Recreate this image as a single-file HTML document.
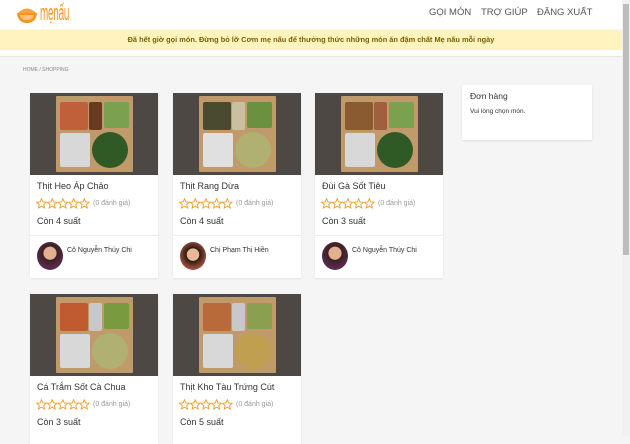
<!DOCTYPE html>
<html><head><meta charset="utf-8"><style>
*{box-sizing:border-box;margin:0;padding:0}
body{width:630px;height:436px;overflow:hidden;background:#f5f5f5;font-family:"Liberation Sans",sans-serif;position:relative}
.hdr{position:absolute;left:0;top:0;width:622px;height:29px;background:#fff}
.nav{position:absolute;top:7px;font-size:9.5px;color:#555;white-space:nowrap}
.ban{position:absolute;left:0;top:30px;width:622px;height:20px;background:#fff3bf;color:#7a6200;font-size:7.4px;font-weight:bold;text-align:center;line-height:20px}
.white{position:absolute;left:0;top:50px;width:622px;height:7px;background:#fff;border-bottom:1px solid #e8e8e8}
.bc{position:absolute;left:23px;top:67px;font-size:5px;color:#888}
.card{position:absolute;width:128px;background:#fff;box-shadow:0 1px 2px rgba(0,0,0,.08)}
.img{height:82px;background:#4d4843;position:relative;overflow:hidden}
.box{position:absolute;left:26px;top:3px;width:77px;height:76px;background:#c09a6a;border-radius:1px}
.c1,.c2,.c3,.c4,.c5{position:absolute;border-radius:2px}
.t{font-size:9px;color:#333;margin:6px 0 0 7px}
.st{margin:6px 0 0 6px;font-size:7px;color:#999;display:flex;align-items:center;height:12px}
.st svg{margin-right:3px}
.q{font-size:9px;color:#333;margin:7px 0 0 7px;height:12px}
.cook{border-top:1px solid #eee;margin-top:7px;height:45px;position:relative}
.av{position:absolute;left:7px;top:6px;width:26px;height:28px;border-radius:50%;background:radial-gradient(circle at 50% 40%,#e0b090 30%,#3a2020 32%,#5a2a50 70%)}
.cn{position:absolute;left:37px;top:11px;font-size:7px;color:#333}
.side{position:absolute;left:462px;top:85px;width:130px;height:55px;background:#fff;box-shadow:0 1px 2px rgba(0,0,0,.1)}
.sb{position:absolute;left:622px;top:0;width:8px;height:436px;background:#f1f1f1}
.th{position:absolute;left:623px;top:4px;width:6px;height:251px;background:#bcbcbc}
</style></head><body>
<svg width="0" height="0" style="position:absolute"><defs><symbol id="s" viewBox="0 0 12 12"><path d="M6 .8 7.5 4.3 11.3 4.6 8.4 7.1 9.3 10.9 6 8.9 2.7 10.9 3.6 7.1.7 4.6 4.5 4.3Z" fill="none" stroke="#f39c2e" stroke-width="1"/></symbol></defs></svg>
<div class="hdr">
<svg style="position:absolute;left:16px;top:4px" width="22" height="20" viewBox="0 0 22 20"><path d="M2 9 Q11 0 20 9 Z" fill="#f7a440"/><path d="M1 9 H21 Q20 19 11 19 Q2 19 1 9Z" fill="#f7941d"/><path d="M4 11 H18 Q17 16 11 16 Q5 16 4 11Z" fill="#fbc27a"/></svg>
<div style="position:absolute;left:40px;top:0px;font-family:'Liberation Sans',sans-serif;font-size:22px;color:#f7941d;transform:scale(.45,1);transform-origin:left top;letter-spacing:-.5px">mẹnấu</div>
<div class="nav" style="left:429px">GỌI MÓN</div>
<div class="nav" style="left:481px">TRỢ GIÚP</div>
<div class="nav" style="left:537px">ĐĂNG XUẤT</div>
</div>
<div class="ban">Đã hết giờ gọi món. Đừng bỏ lỡ Cơm mẹ nấu để thưởng thức những món ăn đậm chất Mẹ nấu mỗi ngày</div>
<div class="white"></div>
<div class="bc">HOME / SHOPPING</div>

<div class="card" style="left:30px;top:93px;height:185px"><div class="img"><div class="box"><div class="c1" style="left:4px;top:6px;width:28px;height:28px;background:#c0603a"></div><div class="c2" style="left:33px;top:6px;width:13px;height:28px;background:#6a3a20"></div><div class="c3" style="left:48px;top:6px;width:25px;height:26px;background:#7aa050"></div><div class="c4" style="left:4px;top:37px;width:30px;height:34px;background:#d8d8d8"></div><div class="c5" style="left:36px;top:36px;width:36px;height:36px;border-radius:50%;background:#2f5a25"></div></div></div>
<div class="t">Thịt Heo Áp Chảo</div><div class="st"><svg width="54" height="11"><use href="#s" x="0" width="11" height="11"/><use href="#s" x="10.7" width="11" height="11"/><use href="#s" x="21.4" width="11" height="11"/><use href="#s" x="32.1" width="11" height="11"/><use href="#s" x="42.8" width="11" height="11"/></svg>(0 đánh giá)</div><div class="q">Còn 4 suất</div>
<div class="cook"><div class="av"></div><div class="cn">Cô Nguyễn Thúy Chi</div></div></div>

<div class="card" style="left:173px;top:93px;height:185px"><div class="img"><div class="box"><div class="c1" style="left:4px;top:6px;width:28px;height:28px;background:#4a4a30"></div><div class="c2" style="left:33px;top:6px;width:13px;height:28px;background:#c8c0a0"></div><div class="c3" style="left:48px;top:6px;width:25px;height:26px;background:#6a9040"></div><div class="c4" style="left:4px;top:37px;width:30px;height:34px;background:#e0e0e0"></div><div class="c5" style="left:36px;top:36px;width:36px;height:36px;border-radius:50%;background:#b0b070"></div></div></div>
<div class="t">Thịt Rang Dừa</div><div class="st"><svg width="54" height="11"><use href="#s" x="0" width="11" height="11"/><use href="#s" x="10.7" width="11" height="11"/><use href="#s" x="21.4" width="11" height="11"/><use href="#s" x="32.1" width="11" height="11"/><use href="#s" x="42.8" width="11" height="11"/></svg>(0 đánh giá)</div><div class="q">Còn 4 suất</div>
<div class="cook"><div class="av" style="background:radial-gradient(circle at 50% 45%,#e8b898 30%,#2a1a10 32%,#a05040 70%)"></div><div class="cn">Chị Phạm Thị Hiền</div></div></div>

<div class="card" style="left:315px;top:93px;height:185px"><div class="img"><div class="box"><div class="c1" style="left:4px;top:6px;width:28px;height:28px;background:#8a5a30"></div><div class="c2" style="left:33px;top:6px;width:13px;height:28px;background:#a06040"></div><div class="c3" style="left:48px;top:6px;width:25px;height:26px;background:#7aa050"></div><div class="c4" style="left:4px;top:37px;width:30px;height:34px;background:#d8d8d8"></div><div class="c5" style="left:36px;top:36px;width:36px;height:36px;border-radius:50%;background:#2f5a25"></div></div></div>
<div class="t">Đùi Gà Sốt Tiêu</div><div class="st"><svg width="54" height="11"><use href="#s" x="0" width="11" height="11"/><use href="#s" x="10.7" width="11" height="11"/><use href="#s" x="21.4" width="11" height="11"/><use href="#s" x="32.1" width="11" height="11"/><use href="#s" x="42.8" width="11" height="11"/></svg>(0 đánh giá)</div><div class="q">Còn 3 suất</div>
<div class="cook"><div class="av"></div><div class="cn">Cô Nguyễn Thúy Chi</div></div></div>

<div class="card" style="left:30px;top:294px;height:150px"><div class="img"><div class="box"><div class="c1" style="left:4px;top:6px;width:28px;height:28px;background:#c05a30"></div><div class="c2" style="left:33px;top:6px;width:13px;height:28px;background:#c8c8c8"></div><div class="c3" style="left:48px;top:6px;width:25px;height:26px;background:#7a9a40"></div><div class="c4" style="left:4px;top:37px;width:30px;height:34px;background:#d8d8d8"></div><div class="c5" style="left:36px;top:36px;width:36px;height:36px;border-radius:50%;background:#b0b070"></div></div></div>
<div class="t">Cá Trắm Sốt Cà Chua</div><div class="st"><svg width="54" height="11"><use href="#s" x="0" width="11" height="11"/><use href="#s" x="10.7" width="11" height="11"/><use href="#s" x="21.4" width="11" height="11"/><use href="#s" x="32.1" width="11" height="11"/><use href="#s" x="42.8" width="11" height="11"/></svg>(0 đánh giá)</div><div class="q">Còn 3 suất</div></div>

<div class="card" style="left:173px;top:294px;height:150px"><div class="img"><div class="box"><div class="c1" style="left:4px;top:6px;width:28px;height:28px;background:#b86a3a"></div><div class="c2" style="left:33px;top:6px;width:13px;height:28px;background:#c8c8c8"></div><div class="c3" style="left:48px;top:6px;width:25px;height:26px;background:#8aa050"></div><div class="c4" style="left:4px;top:37px;width:30px;height:34px;background:#d8d8d8"></div><div class="c5" style="left:36px;top:36px;width:36px;height:36px;border-radius:50%;background:#c0a050"></div></div></div>
<div class="t">Thịt Kho Tàu Trứng Cút</div><div class="st"><svg width="54" height="11"><use href="#s" x="0" width="11" height="11"/><use href="#s" x="10.7" width="11" height="11"/><use href="#s" x="21.4" width="11" height="11"/><use href="#s" x="32.1" width="11" height="11"/><use href="#s" x="42.8" width="11" height="11"/></svg>(0 đánh giá)</div><div class="q">Còn 5 suất</div></div>

<div class="side"><div style="position:absolute;left:8px;top:6px;font-size:8.5px;color:#333">Đơn hàng</div><div style="position:absolute;left:8px;top:23px;font-size:6.5px;color:#333">Vui lòng chọn món.</div></div>
<div class="sb"></div><div class="th"></div>
</body></html>
